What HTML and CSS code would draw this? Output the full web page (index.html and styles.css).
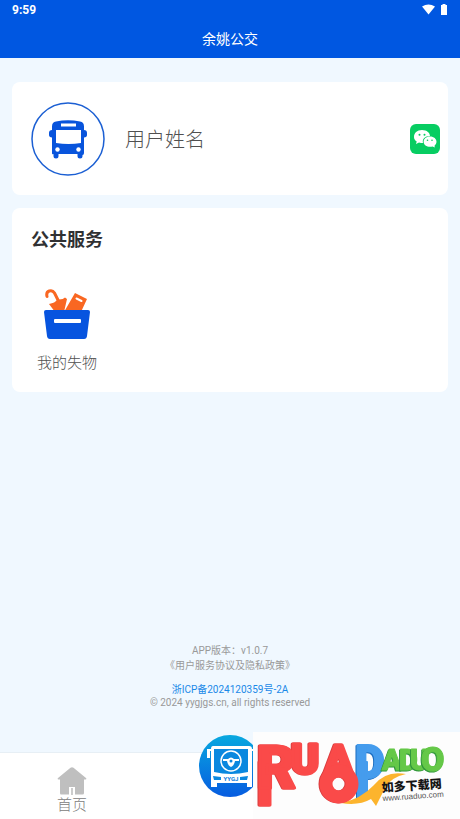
FILE: index.html
```html
<!DOCTYPE html>
<html lang="zh-CN">
<head>
<meta charset="utf-8">
<meta name="viewport" content="width=device-width, initial-scale=1">
<title>余姚公交</title>
<link rel="stylesheet" href="styles.css">
</head>
<body>
<header class="top">
  <div class="status">
    <span>9:59</span>
    <svg class="status-icons" viewBox="0 0 26 12" aria-hidden="true"><path d="M0 2.600Q6.500-1.600 13 2.600L6.500 10.500Z"/><path d="M20.500 0h3v1H25v10h-6V1h1.500z"/></svg>
  </div>
  <h1 class="title">余姚公交</h1>
</header>
<main class="main">
  <section class="card profile">
    <svg class="avatar" viewBox="0 0 74 74" aria-hidden="true">
      <circle cx="37" cy="37" r="36" fill="#fff" stroke="#1b5fd3" stroke-width="1.500"/>
      <path fill="#0854dc" d="M25 19.500q12-2.500 24 0 4 .7 4 5V28q3 0 3 3v2q0 2-3 2.500V51q0 2-1.500 2v1a2.500 2.500 0 0 1-5 0v-2h-19v2a2.500 2.500 0 0 1-5 0v-2Q21 53 21 51V35.500Q18 35 18 33v-2q0-3 3-3v-3.500q0-4.300 4-5z"/>
      <path fill="#fff" d="M30 21.500h15v3H30zM25 28h25v13q-12.500 2-25 0z"/>
      <circle cx="26.500" cy="47.500" r="2.200" fill="#fff"/><circle cx="47.500" cy="47.500" r="2.200" fill="#fff"/>
    </svg>
    <span class="name">用户姓名</span>
    <button class="wechat" type="button" aria-label="微信">
      <svg viewBox="0 0 30 30" aria-hidden="true">
        <rect width="30" height="30" rx="6" fill="#07cd62"/>
        <path fill="#fff" d="M12 6c5 0 8 3 8 6-5 0-8 3-7 7-1 0-3 0-4-.5L6 20l.7-2.500C4.500 16 4 14.500 4 13c0-4 3-7 8-7z"/>
        <path fill="#fff" d="M20 12.500c4 0 6.500 2.500 6.500 5.300 0 1.500-.8 2.900-2 3.900l.3 1.800-2.200-1c-4.600 1.200-9-1-9-4.700 0-2.800 2.500-5.300 6.400-5.300z"/>
        <g fill="#07cd62"><circle cx="9.500" cy="10.800" r="1"/><circle cx="14.500" cy="10.800" r="1"/><circle cx="17.500" cy="16.300" r=".8"/><circle cx="22" cy="16.300" r=".8"/></g>
      </svg>
    </button>
  </section>
  <section class="card services">
    <h2 class="heading">公共服务</h2>
    <a class="service" href="#lost">
      <svg class="service-icon" viewBox="0 0 48 50" aria-hidden="true">
        <path d="M4 7.500C2.500 1.500 9 0 11.500 4L16 13" fill="none" stroke="#f96722" stroke-width="3" stroke-linecap="round"/>
        <path fill="#f96722" d="M6 15q6-1 8.500-4.500Q20 11 22 8.500l2 1.500-3 13h-9zM32 4l12 6-6 13H21z"/>
        <path d="m33.500 9.500 5 2.500" stroke="#fff" stroke-width="2" stroke-linecap="round"/>
        <path fill="#0754df" d="M3 21h42q2 0 2 2l-3 24q-.4 3-3 3H7q-2.600 0-3-3L1 23q0-2 2-2z"/>
        <rect x="11" y="30" width="27" height="4" rx="1" fill="#fff"/>
      </svg>
      <span>我的失物</span>
    </a>
  </section>
  <footer class="legal">
    <p>APP版本：v1.0.7</p>
    <p><a class="policy" href="#policy">《用户服务协议及隐私政策》</a></p>
    <p class="record"><a href="#icp">浙ICP备2024120359号-2A</a></p>
    <p class="copyright">© 2024 yygjgs.cn, all rights reserved</p>
  </footer>
</main>
<nav class="tabs">
  <a class="tab" href="#home">
    <svg class="home" viewBox="0 0 30 28" aria-hidden="true"><path fill="#bfbfbf" d="M13.500.8q1.500-1.200 3 0L29 11q1 1-.5 1.500H27V26q0 1.500-1.500 1.500H18V20h-6v7.500H4Q3 27.500 3 26V12.500H1.500Q0 12 1 11z"/><path fill="#ccc" d="M14 21h2v7h-2z"/></svg>
    <span>首页</span>
  </a>
  <a class="center" href="#ride" aria-label="YYGJ">
    <svg viewBox="0 0 62 62">
      <defs><linearGradient id="blue" x2="0" y2="1"><stop stop-color="#08a8df"/><stop offset="1" stop-color="#075ce0"/></linearGradient></defs>
      <circle cx="31" cy="31" r="31" fill="url(#blue)"/>
      <path fill="#fff" d="M14 11h36q3 0 3 3h4v9h-3v-7h-1v36h-5v-4H18v4h-6V16h-1v7H8v-9h4q0-3 2-3z"/>
      <path fill="#0a88df" d="M15 14h34v23q-17 4-34 0zM14 41l8 1v3h-7zM49 41l-8 1v3h7z"/>
      <circle cx="32" cy="26" r="10" fill="none" stroke="#fff" stroke-width="1.500"/>
      <path d="M24 24h5q3-3 6 0h5v2h-4q-1 5-4 6-3-1-4-6h-4z" fill="#fff"/>
      <circle cx="32" cy="26" r="1.500" fill="#0a86df"/>
      <text class="bus-text" x="32" y="46" text-anchor="middle">YYGJ</text>
    </svg>
  </a>
  <a class="brand" href="#download" aria-label="如多下载网">
    <svg viewBox="0 0 207 87">
      <rect width="207" height="87" fill="#fdfdfd"/>
      <g class="blue">
        <path d="M105 30h9v30l-9 6z"/>
        <text class="d" x="102" y="46">D</text>
      </g>
      <g class="green">
        <text class="g" x="129" y="38">A</text>
        <text class="g" x="146" y="38">D</text>
        <text class="g" x="157" y="38">U</text>
        <text class="o" x="168" y="39">O</text>
      </g>
      <path fill="#fcb42d" d="M88 71q20-4 33-18 12-15 32-11-15 3-21 14l-9 18-5-7q-12 7-30 4z"/>
      <g class="red">
        <path d="M7 30h10v43H7z"/>
        <text class="r" x="4" y="56">R</text>
        <text class="u" x="38" y="42">U</text>
        <text class="a" x="71" y="43">A</text>
        <ellipse class="ring" cx="86" cy="52" rx="13" ry="13"/>
      </g>
      <g transform="rotate(-4 130 60)">
        <text class="slogan" x="129" y="60">如多下载网</text>
        <text class="url" x="129" y="69">www.ruaduo.com</text>
      </g>
    </svg>
  </a>
</nav>
</body>
</html>
```

FILE: styles.css
```css
* { box-sizing: border-box; }
body { margin: 0; min-height: 100vh; display: flex; flex-direction: column; background: #f0f8ff; color: #606266; font-family: Roboto, "Noto Sans CJK SC", sans-serif; }
a { color: inherit; text-decoration: none; }
h1, h2, p { margin: 0; }
svg { display: block; }
.top { background: #0057e1; color: #fff; height: 58px; }
.status { display: flex; justify-content: space-between; align-items: center; height: 20px; padding: 0 12px; font-size: 12px; font-weight: 700; }
.status-icons { width: 26px; height: 12px; fill: #fff; }
.title { font-size: 14px; line-height: 38px; font-weight: 400; text-align: center; }
.main { flex: 1; display: flex; flex-direction: column; gap: 13px; padding: 24px 12px 0; }
.card { background: #fff; border-radius: 8px; }
.profile { display: flex; align-items: center; height: 113px; padding: 0 8px 0 19px; gap: 20px; }
.avatar { width: 74px; height: 74px; }
.name { flex: 1; color: #505050; font-size: 20px; font-weight: 300; }
.wechat { width: 30px; height: 30px; padding: 0; border: 0; background: none; }
.services { height: 184px; padding: 16px 19px; }
.heading { color: #303133; font-size: 18px; line-height: 32px; font-weight: 700; }
.service { display: inline-flex; flex-direction: column; align-items: center; gap: 12px; margin-top: 33px; padding: 0 6px; color: #505050; font-size: 15px; line-height: 24px; font-weight: 300; }
.service-icon { width: 48px; height: 50px; }
.legal { margin-top: auto; padding-bottom: 43px; text-align: center; color: #999; font-size: 10px; line-height: 15px; }
.record { margin-top: 10px; color: #1989e8; line-height: 13px; }
.copyright { line-height: 13px; }
.tabs { position: relative; display: flex; height: 67px; background: #fff; border-top: 1px solid #e7eff5; }
.tab { display: flex; flex-direction: column; align-items: center; width: 144px; padding-top: 14px; color: #808080; font-size: 15px; line-height: 20px; font-weight: 300; }
.home { width: 30px; height: 28px; }
.center { position: absolute; left: calc(50% - 31px); bottom: 22px; width: 62px; }
.bus-text { fill: #087bdd; font-size: 6px; font-weight: 700; }
.brand { position: absolute; right: 0; bottom: 0; width: 207px; }
.brand text { font-family: Roboto, sans-serif; font-weight: 900; }
.red { fill: #fa4a49; stroke: #fa4a49; stroke-width: 3; stroke-linejoin: round; filter: drop-shadow(-1px 0 0 #d93c3e); }
.r { font-size: 60px; }
.u { font-size: 43px; }
.a { font-size: 43px; }
.red .ring { fill: none; stroke-width: 13; }
.blue { fill: #459ced; stroke: #459ced; stroke-width: 2; stroke-linejoin: round; filter: drop-shadow(-1px 1px 0 #1b6dc0); }
.d { font-size: 46px; }
.green { fill: #65c848; stroke: #65c848; stroke-width: 1; stroke-linejoin: round; }
.green text { filter: drop-shadow(-1px 1px 0 #30963b); }
.g { font-size: 29px; }
.o { font-size: 34px; }
.brand .slogan { font: 900 12px "Noto Sans CJK SC", sans-serif; fill: #151515; }
.brand .url { font: 400 8px "Liberation Sans", sans-serif; fill: #555; }
```
